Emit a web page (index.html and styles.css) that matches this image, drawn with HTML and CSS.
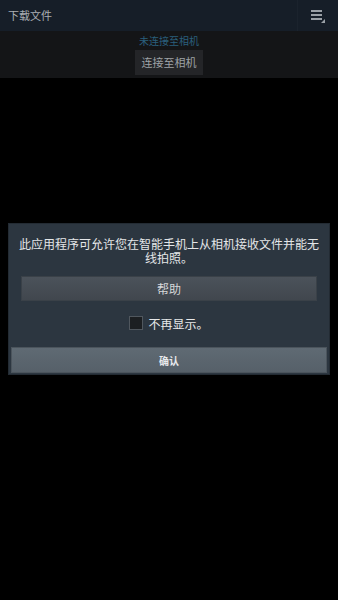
FILE: index.html
```html
<!DOCTYPE html>
<html lang="zh">
<head>
<meta charset="utf-8">
<link rel="stylesheet" href="styles.css">
</head>
<body>
<div class="screen">
  <header class="appbar">
    <span class="title">下载文件</span>
    <span class="sep"></span>
    <span class="menu">
      <svg width="16" height="16" viewBox="0 0 16 16">
        <rect x="1" y="2" width="11" height="2" fill="#9aa0a6"/>
        <rect x="1" y="6" width="11" height="2" fill="#9aa0a6"/>
        <rect x="1" y="10" width="11" height="2" fill="#9aa0a6"/>
        <path d="M15 11 L15 15 L11 15 Z" fill="#9aa0a6"/>
      </svg>
    </span>
  </header>
  <section class="status">
    <div class="status-text">未连接至相机</div>
    <button class="connect">连接至相机</button>
  </section>
  <main class="body">
    <div class="dialog">
      <p class="msg">此应用程序可允许您在智能手机上从相机接收文件并能无线拍照。</p>
      <button class="help">帮助</button>
      <label class="check"><span class="box"></span>不再显示。</label>
      <button class="ok">确认</button>
    </div>
  </main>
</div>
</body>
</html>
```
FILE: styles.css
```css
html, body {
  margin: 0;
  padding: 0;
  background: #000;
}
body {
  font-family: "Noto Sans CJK SC", "Noto Sans", sans-serif;
  width: 338px;
  height: 600px;
  overflow: hidden;
}
.screen {
  display: flex;
  flex-direction: column;
  height: 600px;
}
.appbar {
  height: 31px;
  background: #161e28;
  display: flex;
  align-items: center;
  flex-shrink: 0;
}
.title {
  flex: 1;
  padding-left: 8px;
  font-size: 11px;
  color: #a9aeb3;
  line-height: 1;
}
.sep {
  width: 1px;
  height: 31px;
  background: #1b232d;
}
.menu {
  width: 40px;
  display: flex;
  justify-content: center;
  align-items: center;
  padding-top: 1px;
}
.menu svg { display: block; }
.status {
  height: 47px;
  background: #141517;
  display: flex;
  flex-direction: column;
  align-items: center;
  flex-shrink: 0;
}
.status-text {
  margin-top: 4px;
  font-size: 10px;
  line-height: 12px;
  color: #2a5f7c;
}
.connect {
  margin-top: 3px;
  height: 25px;
  width: 68px;
  padding: 0;
  border: none;
  background: #242528;
  color: #9ea2a6;
  font-family: inherit;
  font-size: 11px;
  line-height: 25px;
}
.body {
  flex: 1;
  background: #000;
  padding-top: 145px;
  padding-left: 8px;
  padding-right: 8px;
}
.dialog {
  background: #2c3640;
  height: 152px;
  display: flex;
  flex-direction: column;
  align-items: center;
  padding-top: 13px;
  box-sizing: border-box;
  border: 1px solid #232b33;
}
.msg {
  margin: 0;
  padding: 0 7px;
  font-size: 12px;
  line-height: 14px;
  color: #e4e6e8;
  text-align: center;
}
.help {
  margin-top: 11px;
  width: 296px;
  height: 25px;
  border: 1px solid #3a4148;
  background: linear-gradient(#4b525a, #41474e);
  color: #d5d7d9;
  font-family: inherit;
  font-size: 12px;
  padding: 0;
}
.check {
  margin-top: 14px;
  display: flex;
  align-items: center;
  font-size: 12px;
  color: #e8e9ea;
  height: 16px;
}
.box {
  width: 12px;
  height: 12px;
  background: #1c1f22;
  border: 1px solid #50575e;
  margin-right: 5px;
}
.ok {
  margin-top: 16px;
  width: 316px;
  height: 26px;
  border: 1px solid #4b545c;
  background: linear-gradient(#5f6a73, #566069);
  color: #e8eaec;
  font-family: inherit;
  font-size: 10px;
  font-weight: bold;
  padding: 0;
}
```
